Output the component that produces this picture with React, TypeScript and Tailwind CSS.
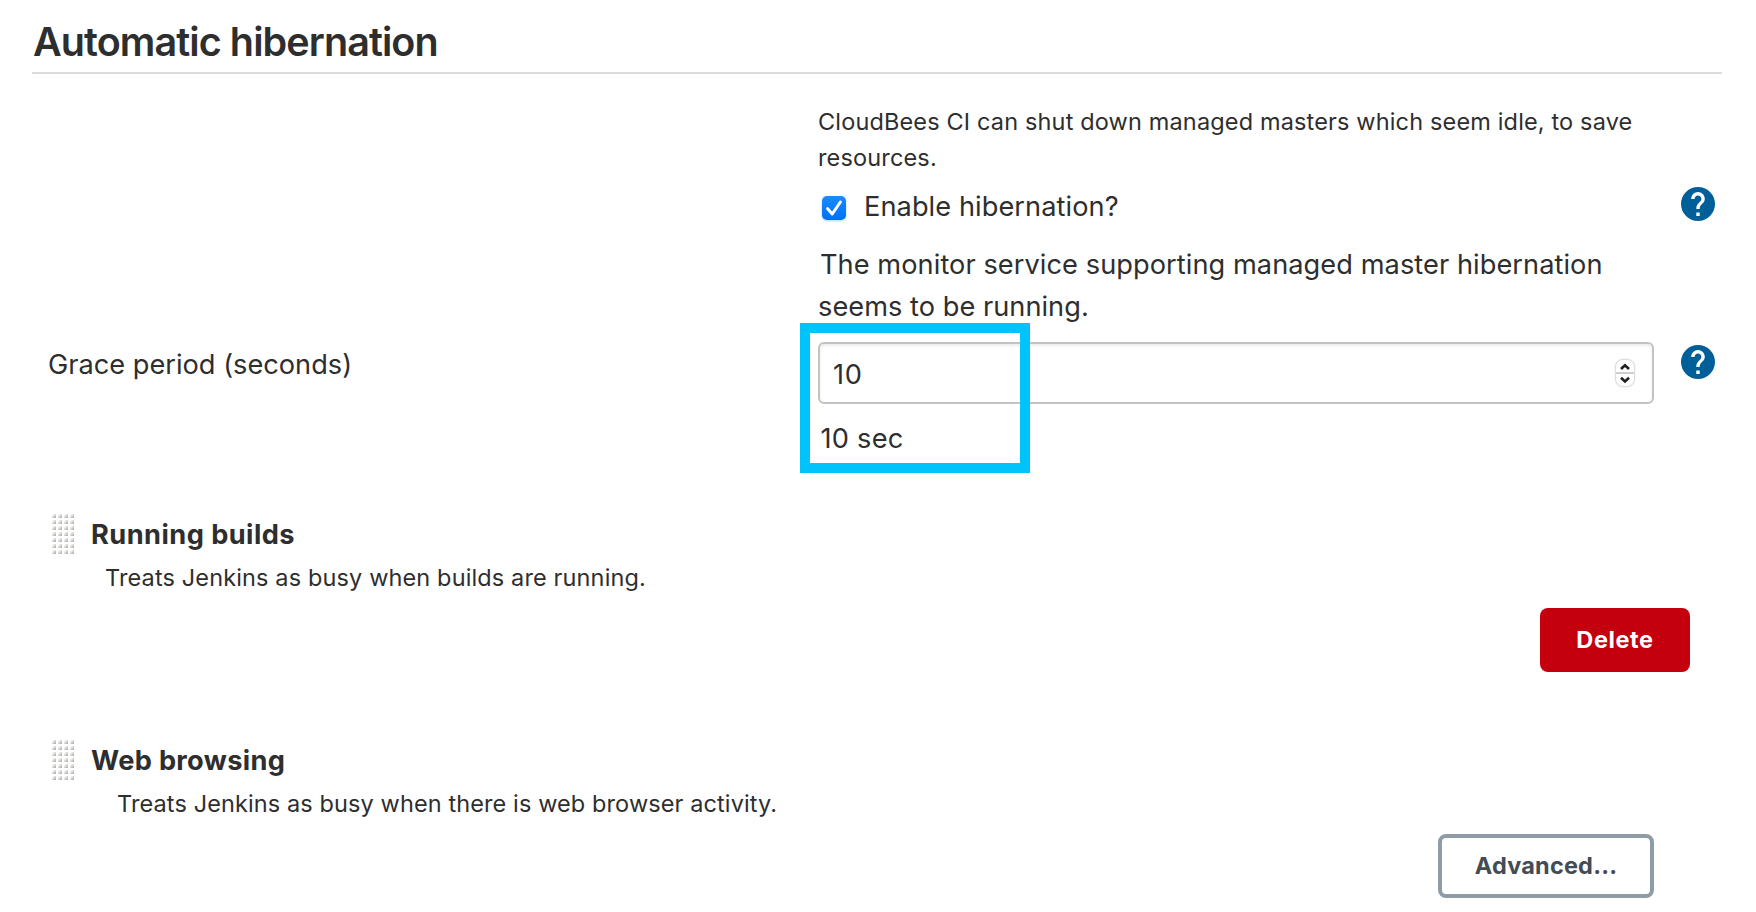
import React from "react";

function HelpIcon() {
  return (
    <svg className="block h-[34px] w-[34px] fill-[#005f98]" viewBox="2 2 20 20" aria-label="Help">
      <circle cx="12" cy="12" r="10" />
      <path
        className="fill-white"
        d="M13 19h-2v-2h2v2zm2.07-7.75l-.9.92C13.45 12.9 13 13.5 13 15h-2v-.5c0-1.1.45-2.1 1.17-2.83l1.24-1.26c.37-.36.59-.86.59-1.41 0-1.1-.9-2-2-2s-2 .9-2 2H8c0-2.21 1.79-4 4-4s4 1.79 4 4c0 .88-.36 1.68-.93 2.25z"
      />
    </svg>
  );
}

const GRIP_ROWS = [0, 1, 2, 3, 4, 5, 6];
const GRIP_COLUMNS = [0, 1, 2, 3];

function Grip() {
  return (
    <svg className="block h-10 w-[22px] cursor-move" viewBox="0 0 22 40">
      <defs>
        <linearGradient id="grip-dot" x1="0" y1="0" x2="1" y2="1">
          <stop offset="0.1" stopColor="#ffffff" />
          <stop offset="0.5" stopColor="#d9d9d5" />
          <stop offset="1" stopColor="#a3a39f" />
        </linearGradient>
      </defs>
      {GRIP_ROWS.map((row) =>
        GRIP_COLUMNS.map((column) => (
          <rect key={`${row}-${column}`} x={column * 6} y={row * 6} width="4" height="4" fill="url(#grip-dot)" />
        )),
      )}
    </svg>
  );
}

function Checkbox() {
  return (
    <svg className="block h-6 w-6 drop-shadow-[0_1px_1px_rgba(0,110,255,0.3)]" viewBox="0 0 24 24">
      <defs>
        <linearGradient id="check-fill" x1="0" y1="0" x2="0" y2="1">
          <stop offset="0" stopColor="#1a8bff" />
          <stop offset="1" stopColor="#0070fb" />
        </linearGradient>
      </defs>
      <rect width="24" height="24" rx="5" fill="url(#check-fill)" />
      <path d="M5.6 12.6 10.2 18 18.4 6" fill="none" stroke="#fff" strokeWidth="3" strokeLinecap="round" strokeLinejoin="round" />
    </svg>
  );
}

function Stepper() {
  return (
    <div className="flex h-7 w-5 flex-col rounded-[8px] border border-[#dedede] bg-white shadow-[0_0_2px_rgba(0,0,0,0.12)]">
      <svg className="block h-[26px] w-[18px]" viewBox="0 0 18 26" fill="none">
        <path d="M0 13H18" stroke="#cfcfcf" strokeWidth="2" />
        <path d="M5 9 9 5.2 13 9M5 17.8 9 21.5 13 17.8" stroke="#1f1f1f" strokeWidth="2.6" />
      </svg>
    </div>
  );
}

export default function App() {
  return (
    <main className="h-[912px] w-[1756px] overflow-hidden bg-white pl-8 pr-[34px] pt-[18px] font-['Inter','Liberation_Sans',sans-serif] text-[27.2px] leading-[42px] text-[#2e2e2e]">
      <h1 className="h-14 border-b-2 border-[#dcdcdc] pl-px text-[39.5px] font-semibold leading-[48px] tracking-[-0.915px]">
        Automatic hibernation
      </h1>

      <section className="grid grid-cols-[786px_836px_34px] pt-[30px]">
        <p className="col-start-2 whitespace-nowrap text-[23.5px] leading-9 tracking-[0.15px]">
          CloudBees CI can shut down managed masters which seem idle, to save
          <br />
          resources.
        </p>

        <label className="col-start-2 mt-[10px] flex items-center gap-[18px] pl-1 tracking-[0.073px]">
          <span className="pt-px">
            <Checkbox />
          </span>
          Enable hibernation?
        </label>
        <div className="ml-[27px] mt-[11px]">
          <HelpIcon />
        </div>

        <p className="col-start-2 mt-4 whitespace-nowrap indent-[2px]">
          <span className="tracking-[0.063px]">The monitor service supporting managed master hibernation</span>
          <br />
          <span className="tracking-[0.03px]">seems to be running.</span>
        </p>

        <div className="col-start-1 pl-4 pt-4">Grace period (seconds)</div>
        <div className="relative pt-[14px]">
          <div className="flex h-[62px] items-center justify-between rounded-[6px] border-2 border-[#c3c3c3] pl-[13px] pr-[17px] shadow-[inset_0_2px_3px_rgba(0,0,0,0.08)]">
            <span className="pt-1 tracking-[0.6px]">10</span>
            <Stepper />
          </div>
          <div className="mt-[14px] pl-[2.5px] tracking-[0.25px]">10 sec</div>
          <div className="pointer-events-none absolute -left-[18px] -top-[5px] h-[150px] w-[230px] border-[10px] border-[#00c3fc]" />
        </div>
        <div className="ml-[27px] pt-[17px]">
          <HelpIcon />
        </div>
      </section>

      <section className="pt-[54px]">
        <div className="flex items-start gap-[17px] pl-5">
          <Grip />
          <h2 className="font-bold tracking-[0.45px]">Running builds</h2>
        </div>
        <p className="mt-1 pl-[73px] text-[23.5px] leading-9 tracking-[0.132px]">
          Treats Jenkins as busy when builds are running.
        </p>
        <div className="mt-3 flex justify-end pr-8">
          <button className="h-16 w-[150px] rounded-[8px] bg-[#c4000e] text-[23.5px] font-bold tracking-[0.6px] text-white">
            Delete
          </button>
        </div>
      </section>

      <section className="pt-[68px]">
        <div className="flex items-start gap-[17px] pl-5">
          <Grip />
          <h2 className="font-bold tracking-[0.32px]">Web browsing</h2>
        </div>
        <p className="mt-1 pl-[85px] text-[23.5px] leading-9 tracking-[0.107px]">
          Treats Jenkins as busy when there is web browser activity.
        </p>
        <div className="mt-3 flex justify-end pr-[68px]">
          <button className="h-16 w-[216px] rounded-[8px] border-4 border-[#8e9da5] text-[23.5px] font-bold tracking-[0.2px] text-[#434b54]">
            Advanced...
          </button>
        </div>
      </section>
    </main>
  );
}
